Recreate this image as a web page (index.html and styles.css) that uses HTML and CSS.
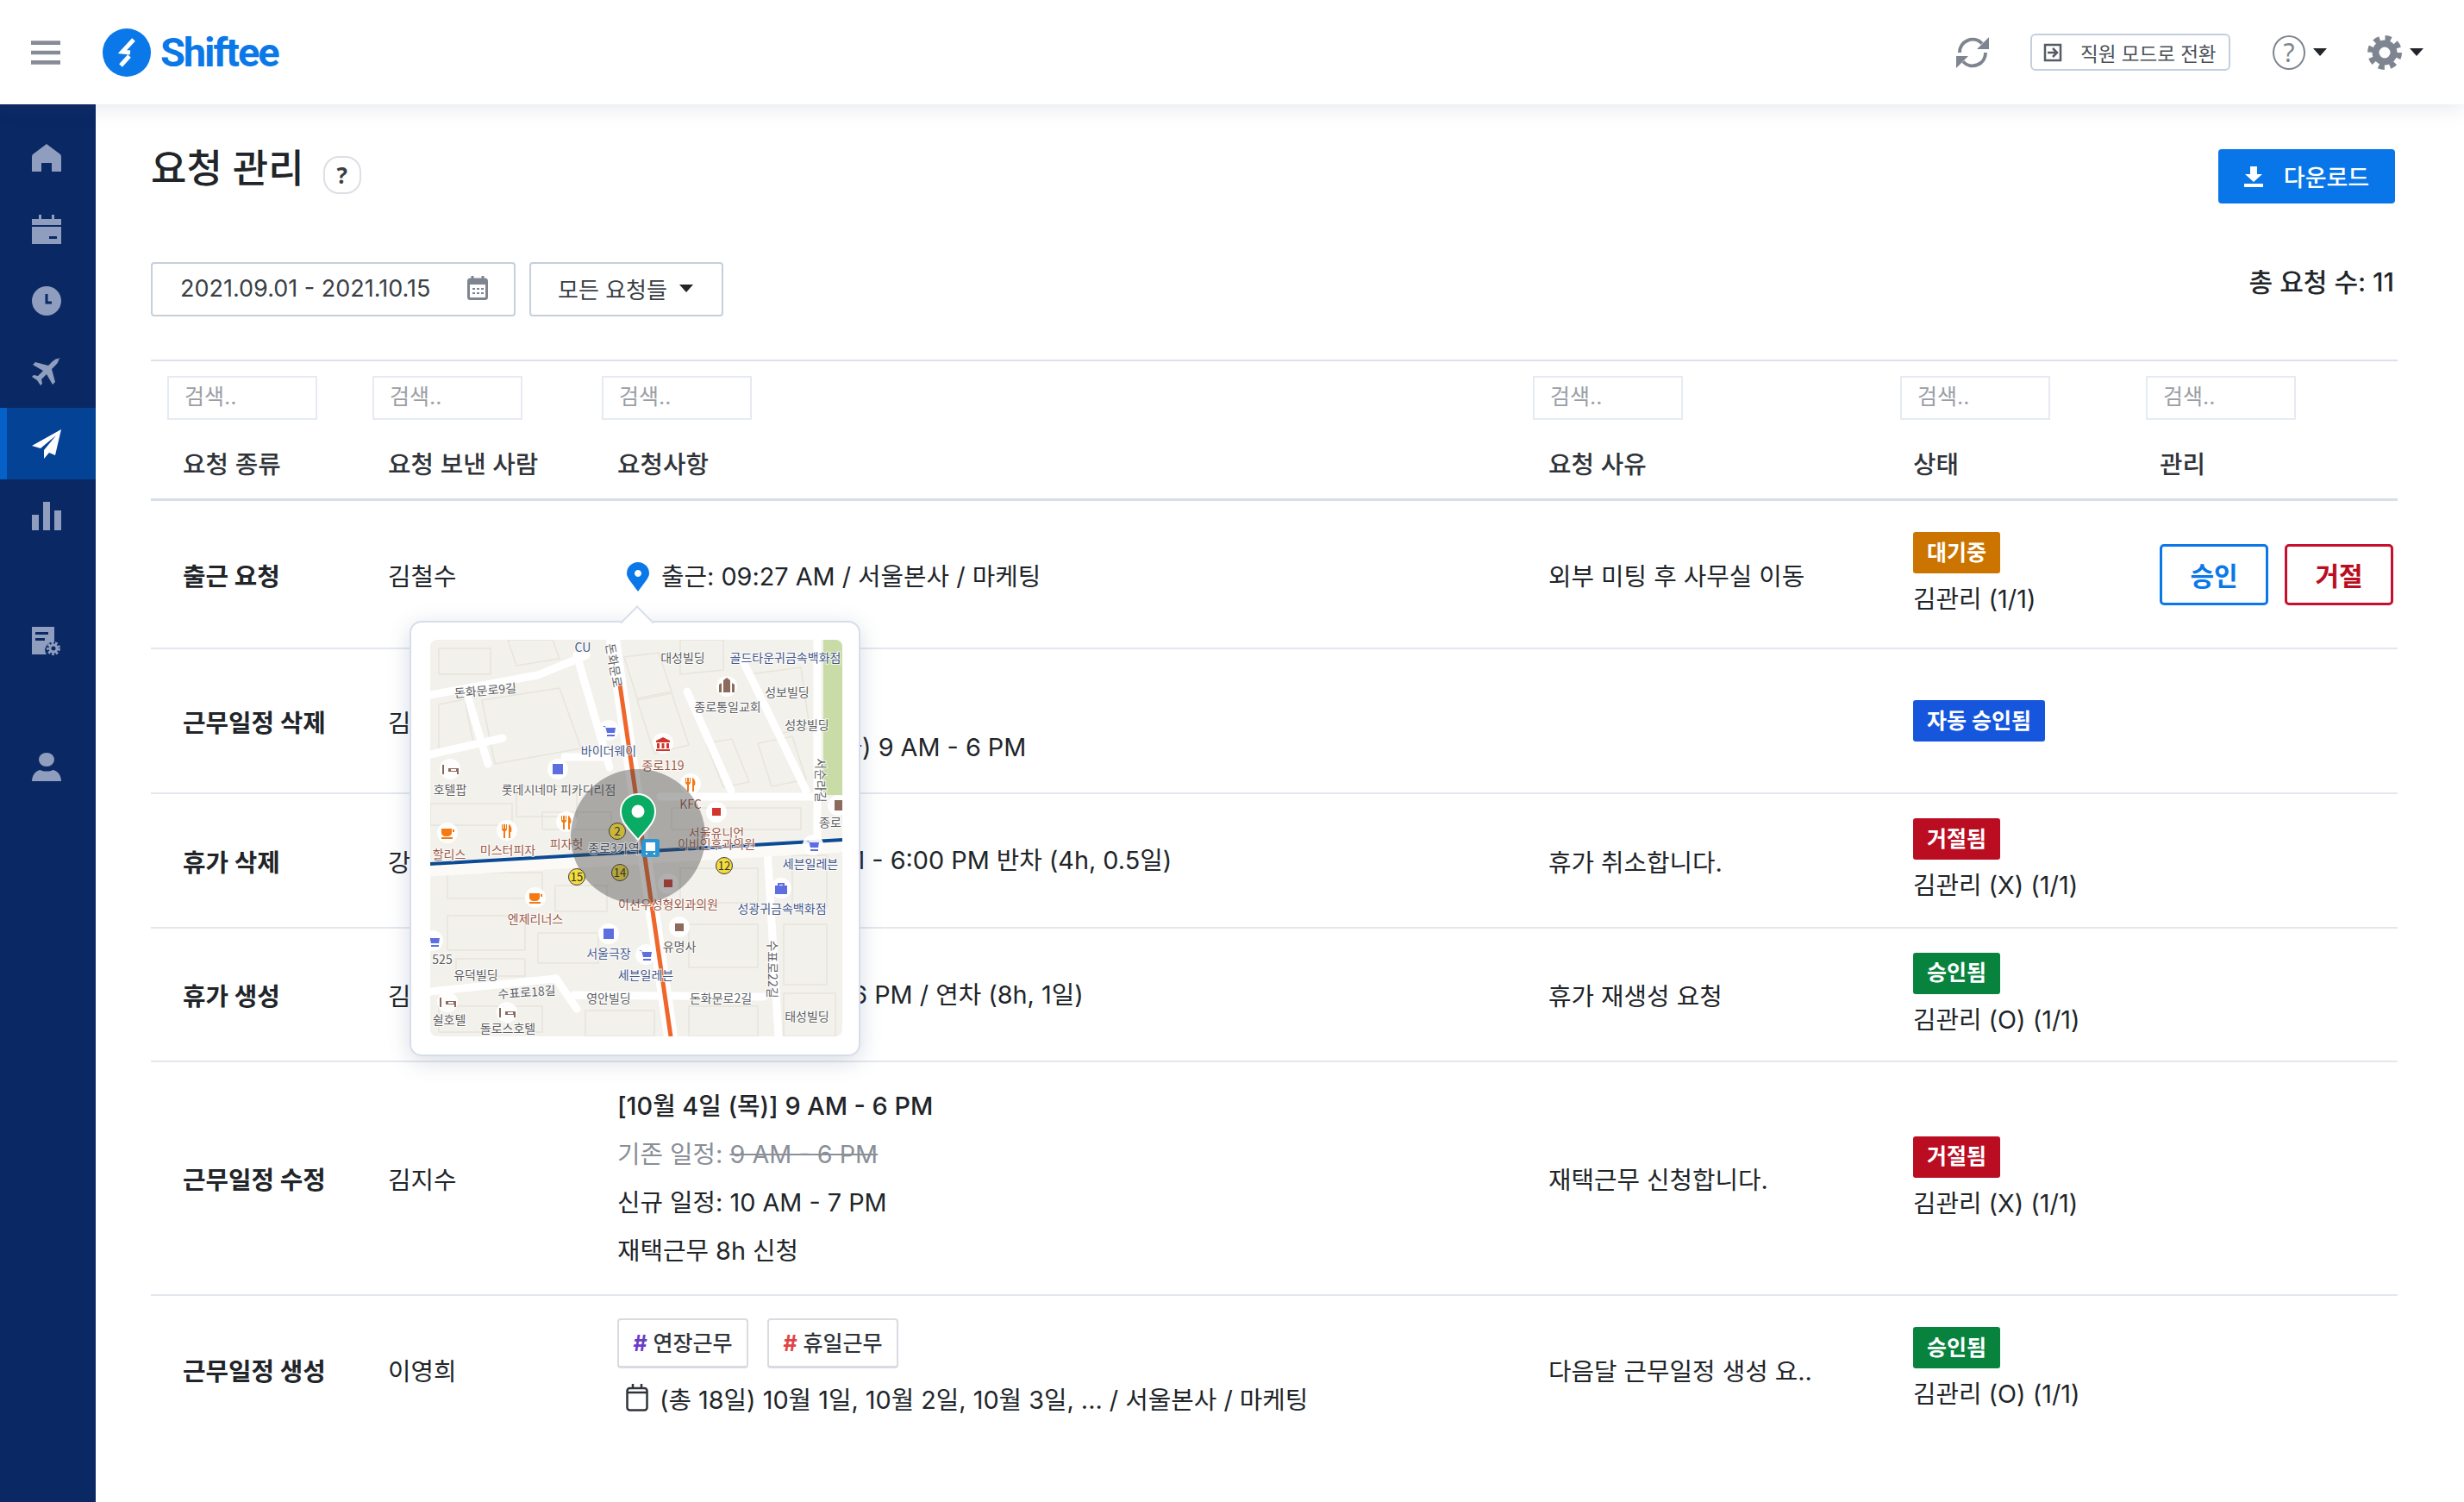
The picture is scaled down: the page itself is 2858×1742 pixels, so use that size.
FILE: index.html
```html
<!DOCTYPE html>
<html lang="ko">
<head>
<meta charset="utf-8">
<title>Shiftee 요청 관리</title>
<link rel="stylesheet" href="styles.css">
</head>
<body>
<header class="topbar">
  <div class="brand">
    <svg class="burger" viewBox="0 0 36 28"><path d="M0 2h36M0 14h36M0 26h36"/></svg>
    <svg class="logo-mark" viewBox="0 0 56 56"><circle cx="28" cy="28" r="28" fill="#0a78e8"/><path d="M36 13 23 27l9 1M31 32 21 43" fill="none" stroke="#fff" stroke-width="5"/></svg>
    <span class="logo-text">Shiftee</span>
  </div>
  <div class="top-actions">
    <svg class="refresh" viewBox="0 0 40 40"><path d="M5 20A15 15 0 0 1 31 9.500M35 20A15 15 0 0 1 9 30.500" fill="none" stroke="#7f8590" stroke-width="4"/><path d="M39 2v14H25zM1 38V24h14z" fill="#7f8590"/></svg>
    <button class="mode-btn">
      <svg class="mode-icon" viewBox="0 0 22 22"><path d="M2 2h18v18H2z M5 11h11M11 6l5 5-5 5" fill="none" stroke="#555b63" stroke-width="2.500"/></svg>
      <span>직원 모드로 전환</span>
    </button>
    <div class="help-menu">
      <span class="help-circle">?</span><i class="caret"></i>
    </div>
    <div class="gear-menu">
      <svg class="gear" viewBox="0 0 40 40"><circle cx="20" cy="20" r="17" fill="none" stroke="#7f8590" stroke-width="6" stroke-dasharray="7 6.350"/><circle cx="20" cy="20" r="10.500" fill="none" stroke="#7f8590" stroke-width="8"/></svg>
      <i class="caret"></i>
    </div>
  </div>
</header>

<div class="shell">
  <nav class="sidebar">
    <div class="nav-group">
      <a class="nav-item"><svg viewBox="0 0 34 34"><path d="M17 1 33 13q1 1 1 3v17H23V23H11v10H0V16q0-2 1-3z"/></svg></a>
      <a class="nav-item"><svg viewBox="0 0 34 34"><path fill-rule="evenodd" d="M8 0h3v5H8zM23 0h3v5h-3zM0 5h34v7H0zM0 14h34v20H0zM20 25v3h9v-3z"/></svg></a>
      <a class="nav-item"><svg viewBox="0 0 34 34"><circle cx="17" cy="17" r="17"/><path d="M17 9v10h6" fill="none" stroke="#0a2864" stroke-width="3"/></svg></a>
      <a class="nav-item"><svg viewBox="0 0 34 34"><path d="M33 1c-2-1-6 0-9 3l-5 5L4 5 1 8l12 7-6 6-5-1-2 2 6 4 4 6 2-2-1-5 6-6 7 12 3-3-4-15 5-5c3-3 4-7 3-9z"/></svg></a>
      <a class="nav-item is-active"><svg viewBox="0 0 34 34"><path d="M34 0 0 19l10 3L28 7 14 24v10l6-7 7 3z"/></svg></a>
      <a class="nav-item"><svg viewBox="0 0 34 34"><path d="M0 16h8v18H0zM13 1h8v33h-8zM26 11h8v23h-8z"/></svg></a>
    </div>
    <div class="nav-group nav-group-gap">
      <a class="nav-item"><svg viewBox="0 0 34 34"><path fill-rule="evenodd" d="M0 0h26v18a9 9 0 0 0-9 14H0zM4 6v3h15V6zM4 13v3h11v-3z"/><circle cx="25" cy="25" r="6" fill="none" stroke-width="4" stroke="#8f9ebe" stroke-dasharray="2.500 1.700"/><circle cx="25" cy="25" r="4" fill="none" stroke-width="3" stroke="#8f9ebe"/></svg></a>
    </div>
    <div class="nav-group nav-group-gap">
      <a class="nav-item"><svg viewBox="0 0 34 34"><ellipse cx="17" cy="8" rx="9" ry="8"/><path d="M0 33c0-8 6-13 10-13 2 2 12 2 14 0 4 0 10 5 10 13z"/></svg></a>
    </div>
  </nav>

  <main class="content">
    <div class="page-head">
      <div class="title-wrap">
        <h1>요청 관리</h1>
        <span class="title-help">?</span>
      </div>
      <button class="download-btn">
        <svg viewBox="0 0 22 24"><path d="M7 0h8v9h6L11 18 1 9h6zM0 20h22v4H0z" fill="#fff"/></svg>
        <span>다운로드</span>
      </button>
    </div>

    <div class="filters">
      <div class="filter-box date-box">
        <span>2021.09.01 - 2021.10.15</span>
        <svg class="cal-small" viewBox="0 0 24 28"><path d="M6 0v5M18 0v5" stroke="#7f8590" stroke-width="3"/><rect x="1.500" y="4" width="21" height="22.500" rx="2" fill="none" stroke="#7f8590" stroke-width="3"/><path d="M1 4h22v6H1z" fill="#7f8590"/><path d="M6 14h3v2H6zM11 14h3v2h-3zM16 14h3v2h-3zM6 19h3v2H6zM11 19h3v2h-3zM16 19h3v2h-3z" fill="#7f8590"/></svg>
      </div>
      <div class="filter-box type-box"><span>모든 요청들</span><i class="caret"></i></div>
      <div class="total">총 요청 수: 11</div>
    </div>

    <section class="table">
      <div class="row search-row">
        <input class="search" placeholder="검색..">
        <input class="search" placeholder="검색..">
        <input class="search" placeholder="검색..">
        <input class="search" placeholder="검색..">
        <input class="search" placeholder="검색..">
        <input class="search" placeholder="검색..">
      </div>
      <div class="row head-row">
        <div>요청 종류</div><div>요청 보낸 사람</div><div>요청사항</div><div>요청 사유</div><div>상태</div><div>관리</div>
      </div>

      <div class="row data-row r1">
        <div class="kind">출근 요청</div>
        <div>김철수</div>
        <div class="req">
          <div class="with-icon pin-line">
            <svg class="pin" viewBox="0 0 28 34"><path fill-rule="evenodd" d="M14 34C6 23 1 18 1 13a13 13 0 0 1 26 0c0 5-5 10-13 21zM14 9a4 4 0 1 0 .01 0z" fill="#0a78e8"/></svg>
            <span>출근: 09:27 AM / 서울본사 / 마케팅</span>
            <div class="popover">
              <svg class="map" viewBox="0 0 478 460">
                <rect width="478" height="460" fill="#f3f1eb"/>
                <rect x="456" width="22" height="180" fill="#c9dca8"/>
                <path class="blocks" d="M10 10h60v30H10zM90 0l10 30 50-8-8-22zM225 20l40-5 15 45-40 8zM290 0v40l50-5V0zM370 40l60-8 10 70-40 8zM240 70l40-8 20 60-40 10zM10 75l30-6 10 50-40 8zM60 70l90-14 25 70-100 18zM100 170h70v35h-70zM0 190h95v25H0zM320 120l30-5 20 50-30 6zM380 120l40-8 16 50-40 8zM20 270h110v30H20zM145 285h60v30h-60zM290 265h90v40h-90zM420 250h40v60h-40zM20 320h90v40H20zM125 340h70v35h-70zM300 330h80v50h-80zM410 330h50v70h-50zM30 370h80v20H30zM180 430h80v30h-80zM300 425h80v35h-80zM410 410h60v50h-60zM10 425h120v30H10zM130 200h80v20h-80zM280 195h150v25H280z"/>
                <g class="roads">
                  <path d="M0 64 125 41 181 18M170 18 208 148M298 60l51 115M363 25l73 150M43 64l24 80M0 133l84-19M391 244l13 216M449 0v232M0 408l146-15 24 35M167 412l220 2M267 182h189M156 136h45"/>
                  <path class="road-main" d="M0 266 478 238"/>
                  <path class="road-wide" d="M212 0 279 460"/>
                </g>
                <path class="orange" d="M220 52 279 460"/>
                <path class="subway" d="M0 260 478 232"/>
                <g class="map-text gray">
                  <text x="293" y="26">대성빌딩</text><text x="414" y="66">성보빌딩</text><text x="345" y="83">종로통일교회</text><text x="437" y="104">성창빌딩</text><text x="23" y="179">호텔팝</text><text x="149" y="179">롯데시네마 피카디리점</text><text x="53" y="394">유덕빌딩</text><text x="207" y="421">영안빌딩</text><text x="337" y="421">돈화문로2길</text><text x="437" y="442">태성빌딩</text><text x="22" y="446">쉴호텔</text><text x="90" y="456">돌로스호텔</text><text x="64" y="64" transform="rotate(-5 64 60)">돈화문로9길</text><text x="112" y="414" transform="rotate(-4 112 410)">수표로18길</text><text x="452" y="167" transform="rotate(90 452 163)">서순라길</text><text x="396" y="386" transform="rotate(90 396 382)">수표로22길</text><text x="212" y="34" transform="rotate(80 212 30)">돈화문로</text><text x="289" y="361">유명사</text><text x="464" y="217">종로</text><text x="14" y="376">525</text>
                </g>
                <g class="map-text blue">
                  <text x="177" y="14">CU</text><text x="412" y="26">골드타운귀금속백화점</text><text x="207" y="134">바이더웨이</text><text x="441" y="265">세븐일레븐</text><text x="408" y="317">성광귀금속백화점</text><text x="207" y="369">서울극장</text><text x="250" y="394">세븐일레븐</text>
                </g>
                <g class="map-text brown">
                  <text x="270" y="151">종로119</text><text x="302" y="196">KFC</text><text x="332" y="229">서울유니언</text><text x="332" y="242">이비인후과의원</text><text x="158" y="242">피자헛</text><text x="90" y="249">미스터피자</text><text x="22" y="254">할리스</text><text x="276" y="312">이선우성형외과의원</text><text x="122" y="329">엔제리너스</text>
                </g>
                <g class="spots">
                  <circle cx="207" cy="105" r="12"/><circle cx="270" cy="120" r="12"/><circle cx="344" cy="54" r="12"/><circle cx="23" cy="150" r="12"/><circle cx="148" cy="150" r="12"/><circle cx="302" cy="167" r="12"/><circle cx="20" cy="224" r="12"/><circle cx="89" cy="221" r="12"/><circle cx="158" cy="211" r="12"/><circle cx="332" cy="200" r="12"/><circle cx="444" cy="238" r="12"/><circle cx="407" cy="288" r="12"/><circle cx="276" cy="283" r="12"/><circle cx="122" cy="299" r="12"/><circle cx="289" cy="333" r="12"/><circle cx="207" cy="341" r="12"/><circle cx="250" cy="365" r="12"/><circle cx="3" cy="349" r="12"/><circle cx="20" cy="420" r="12"/><circle cx="89" cy="432" r="12"/><circle cx="473" cy="192" r="12"/>
                </g>
                <g class="ico-blue">
                  <path d="M200 100h3l2 8h9l1-6h-10l-1 0v0zM205 110h9v2h-9z"/><path d="M436 233h3l2 8h9l1-6h-10zM441 243h9v2h-9z"/><path d="M242 360h3l2 8h9l1-6h-10zM247 370h9v2h-9z"/><path d="M-4 344h3l2 8h9l1-6H1zM1 354h9v2H1z"/>
                  <path d="M142 144h12v12h-12z"/><path d="M201 335h12v12h-12z"/><path d="M400 285h14v10h-14zM403 285v-3h8v3h-2v-1h-4v1z"/>
                </g>
                <g class="ico-red">
                  <path d="M270 113l8 4v2h-16v-2zM263 120h3v6h-3zM268.500 120h3v6h-3zM274 120h3v6h-3zM262 127h16v2h-16z"/><rect x="327" y="195" width="10" height="9"/><rect x="271" y="278" width="10" height="9"/>
                </g>
                <g class="ico-brown">
                  <path d="M335 61v-9l3-2v11zM340 61V47l4-3 4 3v14zM350 61V50l3 2v9z"/><path d="M14 145v11h2v-3h15v3h2v-7l-12 0v4H16v-8zM24 150h6v2h-6z"/><path d="M11 415v11h2v-3h15v3h2v-7l-12 0v4H13v-8zM21 420h6v2h-6z"/><path d="M80 427v11h2v-3h15v3h2v-7l-12 0v4H82v-8zM90 432h6v2h-6z"/><rect x="284" y="329" width="10" height="9"/><rect x="469" y="186" width="9" height="12"/>
                </g>
                <g class="ico-orange">
                  <path d="M296 160v5c0 2 1 3 2 3v8h2v-8c1 0 2-1 2-3v-5h-1v5h-1v-5h-2v5h-1v-5zM304 160c3 1 4 6 3 9h-1v7h-2z"/><path d="M83 214v5c0 2 1 3 2 3v8h2v-8c1 0 2-1 2-3v-5h-1v5h-1v-5h-2v5h-1v-5zM91 214c3 1 4 6 3 9h-1v7h-2z"/><path d="M152 204v5c0 2 1 3 2 3v8h2v-8c1 0 2-1 2-3v-5h-1v5h-1v-5h-2v5h-1v-5zM160 204c3 1 4 6 3 9h-1v7h-2z"/>
                  <path d="M13 219h12v5c0 2-2 4-5 4h-2c-3 0-5-2-5-4zM26 220h2v3h-2zM13 229h13v2H13z"/><path d="M115 294h12v5c0 2-2 4-5 4h-2c-3 0-5-2-5-4zM128 295h2v3h-2zM115 304h13v2h-13z"/>
                </g>
                <circle class="radius" cx="241" cy="228" r="78"/>
                <g class="map-text dark"><text x="213" y="247">종로3가역</text></g>
                <g class="badge-num">
                  <circle cx="217" cy="222" r="9.500" fill="#c9b63a"/><text x="217" y="227">2</text>
                  <circle cx="220" cy="270" r="9.500" fill="#b5a53a"/><text x="220" y="275">14</text>
                  <circle cx="170" cy="275" r="9.500" fill="#f3dc3c"/><text x="170" y="280">15</text>
                  <circle cx="341" cy="262" r="9.500" fill="#f3dc3c"/><text x="341" y="267">12</text>
                </g>
                <rect x="245" y="231" width="21" height="21" rx="3" fill="#2a97d4"/>
                <path d="M250 235h11v10h-11zM250 247h2v2h-2zM259 247h2v2h-2z" fill="#fff"/>
                <path class="green-pin" d="M241 232C229 218 221 211 221 199a20 20 0 0 1 40 0c0 12-8 19-20 33z"/>
                <circle cx="241" cy="199" r="7.500" fill="#fff"/>
              </svg>
            </div>
          </div>
        </div>
        <div>외부 미팅 후 사무실 이동</div>
        <div class="status"><span class="badge amber">대기중</span><span class="approver">김관리 (1/1)</span></div>
        <div class="manage"><button class="act approve">승인</button><button class="act reject">거절</button></div>
      </div>

      <div class="row data-row r2">
        <div class="kind">근무일정 삭제</div>
        <div>김민지</div>
        <div class="req lines-two">
          <div>[10월 5일] 근무일정</div>
          <div>기존 일정: 10월 5일 (화) 9 AM - 6 PM</div>
        </div>
        <div></div>
        <div class="status"><span class="badge blue">자동 승인됨</span></div>
        <div></div>
      </div>

      <div class="row data-row r3">
        <div class="kind">휴가 삭제</div>
        <div>강민호</div>
        <div class="req">10월 6일 (수) 2:00 PM - 6:00 PM 반차 (4h, 0.5일)</div>
        <div>휴가 취소합니다.</div>
        <div class="status"><span class="badge red">거절됨</span><span class="approver">김관리 (X) (1/1)</span></div>
        <div></div>
      </div>

      <div class="row data-row r4">
        <div class="kind">휴가 생성</div>
        <div>김수진</div>
        <div class="req">10월 7일 (목) 9 AM - 6 PM / 연차 (8h, 1일)</div>
        <div>휴가 재생성 요청</div>
        <div class="status"><span class="badge green">승인됨</span><span class="approver">김관리 (O) (1/1)</span></div>
        <div></div>
      </div>

      <div class="row data-row r5">
        <div class="kind">근무일정 수정</div>
        <div>김지수</div>
        <div class="req stack">
          <div class="strong">[10월 4일 (목)] 9 AM - 6 PM</div>
          <div class="muted">기존 일정: <s>9 AM - 6 PM</s></div>
          <div>신규 일정: 10 AM - 7 PM</div>
          <div>재택근무 8h 신청</div>
        </div>
        <div>재택근무 신청합니다.</div>
        <div class="status"><span class="badge red">거절됨</span><span class="approver">김관리 (X) (1/1)</span></div>
        <div></div>
      </div>

      <div class="row data-row r6">
        <div class="kind">근무일정 생성</div>
        <div>이영희</div>
        <div class="req">
          <div class="tags">
            <span class="tag"><b class="hash purple">#</b> 연장근무</span>
            <span class="tag"><b class="hash coral">#</b> 휴일근무</span>
          </div>
          <div class="with-icon">
            <svg class="cal-line" viewBox="0 0 26 32"><path d="M8 0v6M18 0v6M1 10h24" stroke="#30343a" stroke-width="2.500" fill="none"/><rect x="1.500" y="5" width="23" height="25.500" rx="3" fill="none" stroke="#30343a" stroke-width="2.500"/></svg>
            <span>(총 18일) 10월 1일, 10월 2일, 10월 3일, ... / 서울본사 / 마케팅</span>
          </div>
        </div>
        <div>다음달 근무일정 생성 요..</div>
        <div class="status"><span class="badge green">승인됨</span><span class="approver">김관리 (O) (1/1)</span></div>
        <div></div>
      </div>
    </section>
  </main>
</div>
</body>
</html>
```

FILE: styles.css
```css
* { box-sizing: border-box; }
html, body { margin: 0; height: 100%; }
body {
  height: 1742px;
  overflow: hidden;
  background: #fff;
  color: #212529;
  font-family: "Inter", "Noto Sans CJK KR", "Noto Sans", sans-serif;
  font-size: 28.800px;
  display: flex;
  flex-direction: column;
}
button, input { font-family: inherit; }

.topbar {
  height: 121px;
  flex: none;
  display: flex;
  justify-content: space-between;
  align-items: center;
  background: #fff;
  box-shadow: 0 4px 22px rgba(60, 80, 120, .13);
  position: relative;
  z-index: 5;
}
.brand { display: flex; align-items: center; padding-left: 36px; }
.burger { width: 34px; height: 28px; margin-right: 49px; fill: none; stroke: #868b95; stroke-width: 5; }
.logo-mark { width: 56px; height: 56px; margin-right: 11px; }
.logo-text { font: 700 47px/1 "Roboto", sans-serif; color: #0a78e8; letter-spacing: -2.100px; }

.top-actions { display: flex; align-items: center; padding-right: 47px; }
.refresh { width: 40px; height: 40px; margin-right: 47px; }
.mode-btn {
  width: 232px; height: 43px;
  display: flex; align-items: center;
  padding: 0 0 0 13px;
  background: #fff;
  border: 2px solid #c4cfdd;
  border-radius: 6px;
  font-size: 22.500px;
  color: #4a4f57;
}
.mode-icon { width: 22px; height: 22px; margin-right: 21px; }
.help-menu { display: flex; align-items: center; margin-left: 49px; }
.help-circle {
  width: 38px; height: 40px;
  border: 2px solid #7f8590; border-radius: 50%;
  display: flex; align-items: center; justify-content: center;
  font-size: 30px; line-height: 1; color: #7f8590;
  font-family: "Noto Sans", sans-serif;
}
.caret {
  display: inline-block;
  width: 0; height: 0;
  border-left: 8px solid transparent;
  border-right: 8px solid transparent;
  border-top: 9px solid #212529;
}
.help-menu .caret { margin-left: 9px; }
.gear-menu { display: flex; align-items: center; margin-left: 47px; }
.gear { width: 40px; height: 40px; }
.gear-menu .caret { margin-left: 9px; }

.shell { flex: 1; display: flex; min-height: 0; }
.sidebar { width: 111px; flex: none; background: #0a2864; padding-top: 20px; }
.nav-item { height: 83px; display: flex; align-items: center; justify-content: center; padding-right: 3px; }
.nav-item svg { width: 34px; height: 34px; fill: #8f9ebe; }
.nav-item.is-active { background: #044296; border-left: 8px solid #0560c8; padding-right: 11px; }
.nav-item.is-active svg { fill: #fff; }
.nav-group-gap { margin-top: 63px; }

.content { flex: 1; padding: 0 77px 0 64px; min-width: 0; }
.page-head { display: flex; justify-content: space-between; padding: 52px 3px 0 0; height: 183px; }
.title-wrap { display: flex; align-items: flex-start; }
h1 { margin: 0; font-size: 45px; font-weight: 500; line-height: 46px; color: #212529; }
.title-help {
  width: 44px; height: 44px; margin: 8px 0 0 22px;
  border: 2px solid #dcdfe4; border-radius: 18px;
  display: flex; align-items: center; justify-content: center;
  font: 700 26px/1 "Noto Sans", sans-serif; color: #3a3f46;
}
.download-btn {
  width: 205px; height: 63px;
  display: flex; align-items: center; justify-content: center; gap: 24px;
  background: #0876e8; color: #fff;
  border: 0; border-radius: 4px;
  font-size: 27px; font-weight: 500;
}
.download-btn svg { width: 22px; height: 24px; }

.filters { display: flex; align-items: flex-start; height: 113px; }
.filter-box {
  height: 63px;
  display: flex; align-items: center;
  border: 2px solid #c6cfdc; border-radius: 4px;
  color: #3a3f46;
  font-size: 26px;
  padding-bottom: 3px;
}
.date-box { width: 423px; padding-left: 32px; justify-content: space-between; padding-right: 30px; font-size: 27px; }
.cal-small { width: 24px; height: 28px; }
.type-box { width: 225px; margin-left: 16px; padding-left: 31px; }
.type-box .caret { margin-left: 14px; }
.total { margin-left: auto; margin-top: 1px; margin-right: 4px; font-size: 30px; font-weight: 500; line-height: 44px; }

.table { border-top: 2px solid #dde2ea; width: 2606px; }
.row {
  display: grid;
  grid-template-columns: 238px 266px 1080px 423px 286px 313px;
  align-items: center;
}
.search-row { padding: 17px 0 0 19px; grid-template-columns: 238px 266px 1080px 426px 285px 292px; }
.search {
  width: 174px; height: 51px;
  border: 2px solid #e6eaf2; border-radius: 0;
  padding: 0 18px 3px;
  font-size: 25px;
  outline: none;
}
.search::placeholder { color: #9a9ea5; opacity: 1; }
.head-row { height: 94px; padding-top: 8px; border-bottom: 3px solid #d7deea; font-weight: 500; color: #30343a; }
.head-row > div, .data-row > div { padding-left: 37px; }
.data-row { border-bottom: 2px solid #e3e7ee; }
.data-row > div { min-width: 0; }
.r1 { height: 172px; }
.r2 { height: 168px; }
.r3 { height: 156px; }
.r4 { height: 155px; }
.r5 { height: 271px; }
.r6 { height: 170px; border-bottom: 0; }
.kind { font-weight: 700; }
.req { line-height: 40px; }
.r1 .req { padding-top: 5px; }
.lines-two div + div { margin-top: 16px; padding-top: 5px; }
.stack > div { height: 56px; line-height: 56px; }
.strong { font-weight: 500; }
.muted { color: #8a8f98; }
.r6 .req { margin-top: -3px; }

.with-icon { display: flex; align-items: center; gap: 13px; padding-left: 10px; position: relative; }
.pin { width: 28px; height: 34px; flex: none; }
.cal-line { width: 26px; height: 32px; flex: none; margin-top: -6px; }

.popover {
  position: absolute;
  left: -241px;
  top: 71px;
  width: 523px; height: 505px;
  padding: 20px 22px;
  background: #fff;
  border: 2px solid #d7deea;
  border-radius: 14px;
  box-shadow: 0 6px 26px rgba(60, 80, 120, .2);
  z-index: 3;
}
.popover::before {
  content: "";
  position: absolute;
  left: 248px; top: -14px;
  width: 26px; height: 26px;
  background: #fff;
  border-left: 2px solid #d7deea;
  border-top: 2px solid #d7deea;
  transform: rotate(45deg);
}
.map { display: block; width: 478px; height: 460px; border-radius: 8px; position: relative; font-family: "Noto Sans CJK KR", sans-serif; }
.blocks { fill: none; stroke: #e6e4db; stroke-width: 1.500; }
.roads path { fill: none; stroke: #fff; stroke-width: 9; stroke-linecap: round; }
.roads .road-main { stroke-width: 17; stroke: #fbfaf6; }
.roads .road-wide { stroke-width: 16; }
.orange { stroke: #f0652a; stroke-width: 5; fill: none; }
.subway { stroke: #0b4a94; stroke-width: 4; fill: none; }
.map-text { font-size: 14px; text-anchor: middle; paint-order: stroke; stroke: rgba(255, 255, 255, .8); stroke-width: 2px; }
.map-text.gray { fill: #5d5f63; }
.map-text.blue { fill: #44598c; }
.map-text.brown { fill: #9a5a48; }
.map-text.dark { fill: #3e4a5c; stroke: rgba(255, 255, 255, .5); }
.spots circle { fill: #fff; opacity: .92; }
.ico-blue { fill: #5d6ee0; }
.ico-red { fill: #d2352c; }
.ico-brown { fill: #8c6a5c; }
.ico-orange { fill: #f47a14; }
.radius { fill: rgba(70, 70, 70, .42); }
.badge-num { font-size: 13px; text-anchor: middle; fill: #333; stroke: none; }
.badge-num circle { stroke: #3c3c3c; stroke-width: 1; }
.green-pin { fill: #0aab64; stroke: #fff; stroke-width: 2; }

.status { display: flex; flex-direction: column; align-items: flex-start; }
.badge {
  height: 48px; padding: 0 16px;
  display: inline-flex; align-items: center;
  border-radius: 3px;
  color: #fff; font-size: 25px; font-weight: 700; line-height: 1;
}
.amber { background: #cc7400; }
.blue { background: #1556dd; }
.red { background: #bb0d22; }
.green { background: #08833e; }
.approver { line-height: 40px; margin-top: 10px; }
.manage { display: flex; gap: 19px; }
.act {
  width: 126px; height: 71px;
  background: #fff;
  border: 3px solid;
  border-radius: 5px;
  font-size: 30px; font-weight: 700;
}
.approve { color: #0a78e8; border-color: #0a78e8; }
.reject { color: #bb0d22; border-color: #c8102e; }

.tags { display: flex; gap: 22px; margin-bottom: 17px; }
.tag {
  height: 58px; width: 152px;
  display: flex; align-items: center; justify-content: center; gap: 7px;
  border: 2px solid #d8dbe0; border-bottom-width: 3px; border-radius: 4px;
  font-size: 25px; font-weight: 500; color: #30343a;
}
.hash { font-weight: 700; }
.purple { color: #6a3cc8; }
.coral { color: #e04545; }
```
